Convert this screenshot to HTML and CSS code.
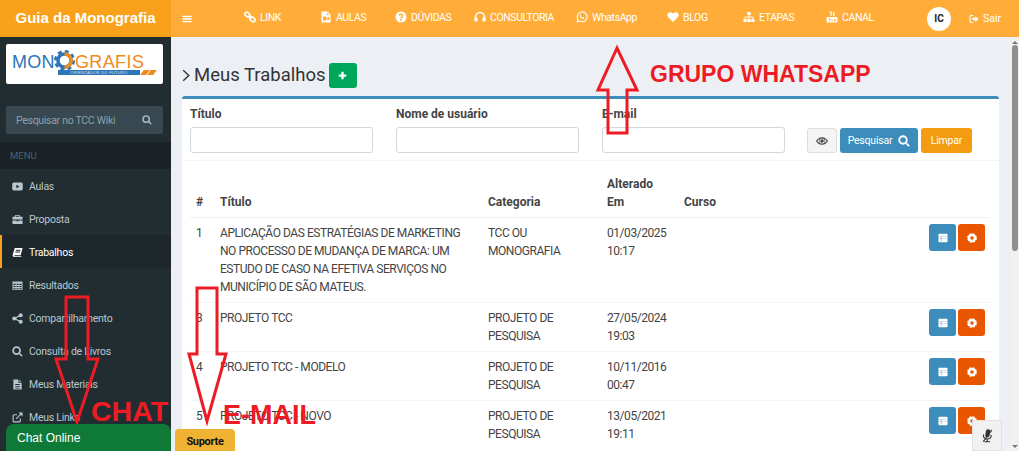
FILE: index.html
```html
<!DOCTYPE html>
<html lang="pt-BR">
<head>
    <meta charset="UTF-8">
    <title>Meus Trabalhos</title>
    <link rel="stylesheet" href="styles.css">
</head>
<body>
    <svg class="sprite" width="0" height="0">
        <symbol id="i-bars" viewBox="0 0 24 24"><path d="M1 4h22v3.5H1zM1 10.2h22v3.5H1zM1 16.5h22V20H1z"/></symbol>
        <symbol id="i-link" viewBox="0 0 24 24"><g fill="none" stroke="currentColor" stroke-width="3.2"><rect x="1.5" y="3.5" width="11" height="7.5" rx="3.7" transform="rotate(40 7 7)"/><rect x="11.5" y="13" width="11" height="7.5" rx="3.7" transform="rotate(40 17 17)"/><path d="M9 9l6 6"/></g></symbol>
        <symbol id="i-film" viewBox="0 0 24 24"><path fill-rule="evenodd" d="M3 1h12l6 6v16H3zM14 3v5h5zM6 11v8h7v-8zM14.500 13v4l4 2v-8z"/></symbol>
        <symbol id="i-question" viewBox="0 0 24 24"><path fill-rule="evenodd" d="M12 1a11 11 0 1 0 0 22a11 11 0 0 0 0-22zM10.300 16.500h3.400v3h-3.400zM10.300 14.800c0-3 3.500-3.200 3.500-5.300c0-2-3.200-2-4.300.2L7 8c1.500-3.800 9.800-4 9.800 1.500c0 3.400-3.300 3.500-3.300 5.300z"/></symbol>
        <symbol id="i-headphones" viewBox="0 0 24 24"><path fill="none" stroke="currentColor" stroke-width="3" d="M3 15v-3a9 9 0 0 1 18 0v3"/><rect x="1" y="13" width="6" height="8" rx="1.500"/><rect x="17" y="13" width="6" height="8" rx="1.500"/></symbol>
        <symbol id="i-whatsapp" viewBox="0 0 24 24"><path fill="none" stroke="currentColor" stroke-width="2.200" d="M2.500 21.500l1.400-5A9.800 9.800 0 1 1 7.600 20.200z"/><path d="M8.500 6.800c-2 1.500-1.500 4 .8 6.500c2.500 2.600 5.300 3.500 7 1.700c.8-.9.600-1.500.2-1.700l-2-1c-.5-.2-.8 0-1.200.6c-.3.400-.6.500-1.200.2c-1.200-.6-2.400-1.800-3-2.900c-.2-.4 0-.6.500-1.200c.3-.4.200-.7 0-1.200l-.8-1.800c-.2-.4-.7-.5-1.300-.2z"/></symbol>
        <symbol id="i-heart" viewBox="0 0 24 24"><path d="M12 22L2.500 12.500C-1.500 8 1.500 2.500 6.500 2.500C9 2.500 11 4 12 5.500C13 4 15 2.500 17.500 2.500C22.500 2.500 25.500 8 21.500 12.500z"/></symbol>
        <symbol id="i-sitemap" viewBox="0 0 24 24"><path d="M8.500 2h7v6h-7zM1 16h6.500v6H1zM8.750 16h6.500v6h-6.500zM16.500 16H23v6h-6.500z"/><path fill="none" stroke="currentColor" stroke-width="1.800" d="M4.200 16v-4h15.600v4M12 8v8"/></symbol>
        <symbol id="i-youtube" viewBox="0 0 24 24"><path fill-rule="evenodd" d="M7 1h2l1 3l1-3h2l-2 5v4H9V6zM14 3h3v7h-3zM3 12h18a2 2 0 0 1 2 2v7a2 2 0 0 1-2 2H3a2 2 0 0 1-2-2v-7a2 2 0 0 1 2-2zM5 15v1.500h1.500V21H8v-4.500h1.500V15zM11 17v4h3v-4h-1v3h-1v-3zM16 15v6h3v-4h-2v-2z"/></symbol>
        <symbol id="i-signout" viewBox="0 0 24 24"><path fill="none" stroke="currentColor" stroke-width="2.500" d="M10 3.500H5a2.500 2.500 0 0 0-2.500 2.500v12A2.500 2.500 0 0 0 5 20.500h5"/><path d="M15 5l8 7l-8 7v-4H8V9h7z"/></symbol>
        <symbol id="i-search" viewBox="0 0 24 24"><circle cx="10" cy="10" r="7.500" fill="none" stroke="currentColor" stroke-width="3.800"/><path d="M15 17.500l2.500-2.500l6 6l-2.500 2.500z"/></symbol>
        <symbol id="i-play" viewBox="0 0 24 24"><path fill-rule="evenodd" d="M4 3.500h16a3.500 3.500 0 0 1 3.500 3.500v10a3.500 3.500 0 0 1-3.500 3.500H4A3.500 3.500 0 0 1 .5 17V7A3.500 3.500 0 0 1 4 3.500zM9.500 8v8l7-4z"/></symbol>
        <symbol id="i-briefcase" viewBox="0 0 24 24"><path fill-rule="evenodd" d="M8 2h8a1.500 1.500 0 0 1 1.500 1.500V6H23v6H1V6h5.500V3.500A1.500 1.500 0 0 1 8 2zM8.500 4v2h7V4zM1 14h9v2h4v-2h9v8H1z"/></symbol>
        <symbol id="i-book" viewBox="0 0 24 24"><path fill-rule="evenodd" d="M6 2h17l-4 16H6c-1.500 0-1.500 2 0 2h15l-1 2H5c-3 0-4-2.500-3.500-5zM8.500 6l-.4 2h10l.4-2zM7.600 10l-.4 2h10l.4-2z"/></symbol>
        <symbol id="i-table" viewBox="0 0 24 24"><path fill-rule="evenodd" d="M1 3h22v18H1zM3 8v3h5V8zM10 8v3h4V8zM16 8v3h5V8zM3 13v2.500h5V13zM10 13v2.500h4V13zM16 13v2.500h5V13zM3 17.500V19h5v-1.500zM10 17.500V19h4v-1.500zM16 17.500V19h5v-1.500z"/></symbol>
        <symbol id="i-share" viewBox="0 0 24 24"><circle cx="5" cy="12" r="4.500"/><circle cx="19" cy="5" r="4.500"/><circle cx="19" cy="19" r="4.500"/><path fill="none" stroke="currentColor" stroke-width="2.500" d="M19 5L5 12l14 7"/></symbol>
        <symbol id="i-file" viewBox="0 0 24 24"><path fill-rule="evenodd" d="M3 1h11v7h7v15H3zM16 1.500L20.500 6H16zM7 11v2h10v-2zM7 15v2h10v-2zM7 19v1.500h10V19z"/></symbol>
        <symbol id="i-external" viewBox="0 0 24 24"><path fill="none" stroke="currentColor" stroke-width="2.500" d="M18 14v5a2.500 2.500 0 0 1-2.500 2.500H5A2.500 2.500 0 0 1 2.500 19V8.500A2.500 2.500 0 0 1 5 6h6M9 15L21 3"/><path d="M14 1h9v9z"/></symbol>
        <symbol id="i-eye" viewBox="0 0 24 24"><path fill-rule="evenodd" d="M12 4.500c5.500 0 9.500 3.500 12 7.500c-2.500 4-6.500 7.500-12 7.500S2.500 16 0 12c2.500-4 6.500-7.500 12-7.500zM12 6.800a5.200 5.200 0 1 0 0 10.400a5.200 5.200 0 0 0 0-10.400zM2.500 12c1.200 1.700 2.600 3 4.200 4a7 7 0 0 1 0-8c-1.600 1-3 2.300-4.200 4zM17.300 8a7 7 0 0 1 0 8c1.600-1 3-2.300 4.200-4c-1.200-1.700-2.600-3-4.200-4z"/><circle cx="12" cy="12" r="3.500"/></symbol>
        <symbol id="i-plus" viewBox="0 0 24 24"><path d="M9 2h6v7h7v6h-7v7H9v-7H2V9h7z"/></symbol>
        <symbol id="i-list" viewBox="0 0 24 24"><path fill-rule="evenodd" d="M3 2h18a2 2 0 0 1 2 2v16a2 2 0 0 1-2 2H3a2 2 0 0 1-2-2V4a2 2 0 0 1 2-2zM1 7.500v1h22v-1zM1 13v1h22v-1zM7 7v13h1.200V7z"/></symbol>
        <symbol id="i-gear" viewBox="0 0 24 24"><circle cx="12" cy="12" r="7" fill="none" stroke="currentColor" stroke-width="5.500"/><circle cx="12" cy="12" r="10" fill="none" stroke="currentColor" stroke-width="3.500" stroke-dasharray="5.200 2.650"/></symbol>
        <symbol id="i-mic" viewBox="0 0 24 24"><rect x="9" y="2" width="7" height="13" rx="3.500" transform="rotate(10 12 8)"/><path fill="none" stroke="currentColor" stroke-width="1.800" d="M5.500 10.500c-.5 4.500 2 7 6 7s6.500-2.500 6.500-6.500M11.500 17.500V21M7 22h9M19 3L5 22"/></symbol>
        <symbol id="i-chevron" viewBox="0 0 10 16"><path fill="none" stroke="currentColor" stroke-width="1.800" d="M1.500 1.500L8.500 8L1.500 14.500"/></symbol>
    </svg>

    <div class="window">
        <header class="topbar">
            <div class="brand">Guia da Monografia</div>
            <div class="topnav">
                <svg class="toggle"><use href="#i-bars"/></svg>
                <nav class="topnav-links">
                    <a><svg class="ico"><use href="#i-link"/></svg>LINK</a>
                    <a><svg class="ico"><use href="#i-film"/></svg>AULAS</a>
                    <a><svg class="ico"><use href="#i-question"/></svg>DÚVIDAS</a>
                    <a><svg class="ico"><use href="#i-headphones"/></svg>CONSULTORIA</a>
                    <a><svg class="ico"><use href="#i-whatsapp"/></svg>WhatsApp</a>
                    <a><svg class="ico"><use href="#i-heart"/></svg>BLOG</a>
                    <a><svg class="ico"><use href="#i-sitemap"/></svg>ETAPAS</a>
                    <a><svg class="ico"><use href="#i-youtube"/></svg>CANAL</a>
                </nav>
                <div class="avatar">IC</div>
                <a class="signout"><svg class="ico"><use href="#i-signout"/></svg>Sair</a>
            </div>
        </header>

        <div class="layout">
            <aside class="sidebar">
                <div class="logo">
                    <span class="logo-mon">MON</span>
                    <svg class="logo-gear" viewBox="0 0 24 24"><circle cx="12" cy="12" r="10.500" fill="none" stroke="#2e75b6" stroke-width="3" stroke-dasharray="4.500 3.750"/><circle cx="12" cy="12" r="7.500" fill="none" stroke="#2e75b6" stroke-width="4"/><path d="M12 4.500A7.500 7.500 0 0 1 12 19.500" fill="none" stroke="#ef8a1d" stroke-width="4"/></svg>
                    <span class="logo-grafis">GRAFIS</span>
                    <span class="logo-bar">ORIENTADOR DO FUTURO</span>
                    <span class="logo-slash"></span>
                    <span class="logo-slash"></span>
                </div>
                <div class="side-search">
                    <span>Pesquisar no TCC Wiki</span>
                    <svg class="ico"><use href="#i-search"/></svg>
                </div>
                <div class="menu-head">MENU</div>
                <ul class="menu">
                    <li><svg class="ico"><use href="#i-play"/></svg>Aulas</li>
                    <li><svg class="ico"><use href="#i-briefcase"/></svg>Proposta</li>
                    <li class="active"><svg class="ico"><use href="#i-book"/></svg>Trabalhos</li>
                    <li><svg class="ico"><use href="#i-table"/></svg>Resultados</li>
                    <li><svg class="ico"><use href="#i-share"/></svg>Compartilhamento</li>
                    <li><svg class="ico"><use href="#i-search"/></svg>Consulta de Livros</li>
                    <li><svg class="ico"><use href="#i-file"/></svg>Meus Materiais</li>
                    <li><svg class="ico"><use href="#i-external"/></svg>Meus Links</li>
                </ul>
            </aside>

            <main class="content">
                <div class="page-title">
                    <svg class="chevron"><use href="#i-chevron"/></svg>
                    <h1>Meus Trabalhos</h1>
                    <button class="btn btn-add"><svg class="ico"><use href="#i-plus"/></svg></button>
                </div>
                <section class="box">
                    <form class="filters">
                        <label>Título<input type="text"></label>
                        <label>Nome de usuário<input type="text"></label>
                        <label>E-mail<input type="text"></label>
                        <div class="filter-actions">
                            <button type="button" class="btn btn-eye"><svg class="ico"><use href="#i-eye"/></svg></button>
                            <button type="button" class="btn btn-search">Pesquisar<svg class="ico"><use href="#i-search"/></svg></button>
                            <button type="button" class="btn btn-clear">Limpar</button>
                        </div>
                    </form>
                    <table class="works">
                        <thead>
                            <tr><th class="col-num">#</th><th class="col-title">Título</th><th class="col-cat">Categoria</th><th class="col-date">Alterado Em</th><th>Curso</th><th class="col-act"></th></tr>
                        </thead>
                        <tbody>
                            <tr>
                                <td>1</td>
                                <td class="cell-title">APLICAÇÃO DAS ESTRATÉGIAS DE MARKETING NO PROCESSO DE MUDANÇA DE MARCA: UM ESTUDO DE CASO NA EFETIVA SERVIÇOS NO MUNICÍPIO DE SÃO MATEUS.</td>
                                <td>TCC OU MONOGRAFIA</td>
                                <td>01/03/2025 10:17</td>
                                <td></td>
                                <td class="actions"><button class="btn btn-list"><svg class="ico"><use href="#i-list"/></svg></button><button class="btn btn-gear"><svg class="ico"><use href="#i-gear"/></svg></button></td>
                            </tr>
                            <tr>
                                <td>3</td>
                                <td class="cell-title">PROJETO TCC</td>
                                <td>PROJETO DE PESQUISA</td>
                                <td>27/05/2024 19:03</td>
                                <td></td>
                                <td class="actions"><button class="btn btn-list"><svg class="ico"><use href="#i-list"/></svg></button><button class="btn btn-gear"><svg class="ico"><use href="#i-gear"/></svg></button></td>
                            </tr>
                            <tr>
                                <td>4</td>
                                <td class="cell-title">PROJETO TCC - MODELO</td>
                                <td>PROJETO DE PESQUISA</td>
                                <td>10/11/2016 00:47</td>
                                <td></td>
                                <td class="actions"><button class="btn btn-list"><svg class="ico"><use href="#i-list"/></svg></button><button class="btn btn-gear"><svg class="ico"><use href="#i-gear"/></svg></button></td>
                            </tr>
                            <tr>
                                <td>5</td>
                                <td class="cell-title">PROJETO TCC - NOVO</td>
                                <td>PROJETO DE PESQUISA</td>
                                <td>13/05/2021 19:11</td>
                                <td></td>
                                <td class="actions"><button class="btn btn-list"><svg class="ico"><use href="#i-list"/></svg></button><button class="btn btn-gear"><svg class="ico"><use href="#i-gear"/></svg></button></td>
                            </tr>
                        </tbody>
                    </table>
                </section>
            </main>

            <div class="scrollbar">
                <span class="scroll-up"></span>
                <span class="scroll-thumb"></span>
                <span class="scroll-down"></span>
            </div>
        </div>

        <!-- annotations drawn over the page -->
        <svg class="marks" viewBox="0 0 1019 451">
            <path d="M617 48L598 90H608V133H627V90H637z"/>
            <path d="M66 297H88V359H98L77 422L56 359H66z"/>
            <path d="M197 288H217V354H226L207 421L189 354H197z"/>
        </svg>
        <span class="mark-label mark-whatsapp">GRUPO WHATSAPP</span>
        <span class="mark-label mark-chat">CHAT</span>
        <span class="mark-label mark-email">E-MAIL</span>

        <div class="chat-tab">Chat Online</div>
        <div class="support-tab">Suporte</div>
        <div class="mic-tab"><svg class="ico"><use href="#i-mic"/></svg></div>
    </div>
</body>
</html>
```

FILE: styles.css
```css
* {
    box-sizing: border-box;
}
html, body {
    margin: 0;
    padding: 0;
    background: #fff;
    overflow: hidden;
}
body {
    font-family: Roboto, "Noto Sans", Arial, sans-serif;
    font-size: 12px;
    color: #444;
}
.sprite {
    position: absolute;
}
.ico {
    width: 12px;
    height: 12px;
    fill: currentColor;
    flex: none;
}
.window {
    position: relative;
    width: 1019px;
    height: 451px;
    overflow: hidden;
    display: flex;
    flex-direction: column;
}

/* top bar */
.topbar {
    display: flex;
    height: 37px;
    flex: none;
}
.brand {
    width: 171px;
    background: #f9a11b;
    color: #fff;
    font-family: "Liberation Sans", Arial, sans-serif;
    font-weight: bold;
    font-size: 15px;
    line-height: 36px;
    text-align: center;
}
.topnav {
    flex: 1;
    display: flex;
    align-items: center;
    background: #ffad38;
    color: #fff;
    padding-left: 11px;
}
.toggle {
    width: 10px;
    height: 10px;
    fill: #fff;
    flex: none;
}
.topnav-links {
    margin-left: 52px;
    display: grid;
    grid-template-columns: 76px 75px 79px 102px 91px 76px 83px 101px;
    margin-top: -3px;
}
.topnav-links a {
    display: flex;
    align-items: center;
    gap: 4px;
    font-size: 10.500px;
    letter-spacing: -.4px;
}
.avatar {
    width: 24px;
    height: 24px;
    border-radius: 50%;
    background: #fff;
    color: #222;
    font-size: 10px;
    font-weight: bold;
    text-align: center;
    line-height: 24px;
}
.signout {
    margin-left: 18px;
    display: flex;
    align-items: center;
    gap: 4px;
    font-size: 10.500px;
}
.signout .ico {
    width: 10px;
    height: 10px;
}

/* sidebar */
.layout {
    flex: 1;
    display: flex;
    min-height: 0;
}
.sidebar {
    width: 171px;
    flex: none;
    background: #222d32;
    padding-top: 7px;
}
.logo {
    position: relative;
    margin: 0 8px 0 6px;
    height: 40px;
    background: #fff;
    border-radius: 2px;
    display: flex;
    align-items: flex-start;
    padding: 10px 0 0 6px;
    font-family: "Liberation Sans", Arial, sans-serif;
    font-size: 18px;
    line-height: 16px;
}
.logo-mon {
    color: #2e75b6;
    letter-spacing: .3px;
}
.logo-grafis {
    color: #ef8a1d;
    letter-spacing: .4px;
}
.logo-gear {
    width: 21px;
    height: 21px;
    margin: -4px 0 0 -1px;
}
.logo-bar {
    position: absolute;
    left: 52px;
    top: 26px;
    width: 82px;
    height: 5px;
    background: #2e75b6;
    color: #dbe8f4;
    font-size: 4px;
    line-height: 5px;
    text-align: center;
    letter-spacing: .3px;
    white-space: nowrap;
}
.logo-slash {
    position: absolute;
    left: 136px;
    top: 26px;
    width: 6px;
    height: 5px;
    background: #ef8a1d;
    transform: skewX(-35deg);
}
.logo-slash + .logo-slash {
    left: 143px;
}
.side-search {
    margin: 22px 8px 8px 6px;
    height: 28px;
    background: #374850;
    border-radius: 2px;
    color: #8fa0a8;
    display: flex;
    align-items: center;
    justify-content: space-between;
    padding: 0 11px 0 10px;
    font-size: 10.500px;
    letter-spacing: -.3px;
}
.side-search .ico {
    width: 10px;
    height: 10px;
    color: #a6b4ba;
}
.menu-head {
    height: 27px;
    background: #1a2226;
    color: #4b646f;
    font-size: 9.500px;
    line-height: 28px;
    padding-left: 10px;
}
.menu {
    list-style: none;
    margin: 0;
    padding: 0;
}
.menu li {
    height: 33px;
    display: flex;
    align-items: center;
    gap: 6px;
    padding: 1px 0 0 12px;
    color: #b8c7ce;
    font-size: 10.500px;
    letter-spacing: -.25px;
}
.menu .ico {
    width: 11px;
    height: 11px;
}
.menu li.active {
    background: #1e282c;
    color: #fff;
    border-left: 2px solid #f9a11b;
    padding-left: 10px;
}

/* content */
.content {
    flex: 1;
    min-width: 0;
    background: #ecf0f5;
    padding: 26px 11px 0 11px;
}
.page-title {
    display: flex;
    align-items: center;
    gap: 4px;
    height: 25px;
}
.chevron {
    width: 8px;
    height: 13px;
    fill: none;
    color: #333;
}
.page-title h1 {
    margin: -2px -1px 0 0;
    font-size: 18.500px;
    font-weight: normal;
    color: #333;
}
.btn {
    border: 1px solid transparent;
    border-radius: 3px;
    padding: 0;
    display: inline-flex;
    align-items: center;
    justify-content: center;
    color: #fff;
    font-family: inherit;
}
.btn-add {
    width: 28px;
    height: 25px;
    background: #00a65a;
}
.btn-add .ico {
    width: 9px;
    height: 9px;
}
.box {
    margin-top: 8px;
    background: #fff;
    border-top: 3px solid #3c8dbc;
    border-radius: 3px;
    height: 400px;
}
.filters {
    display: flex;
    align-items: flex-end;
    padding: 7px 8px 7px 8px;
    border-bottom: 1px solid #f4f4f4;
}
.filters label {
    display: flex;
    flex-direction: column;
    gap: 4px;
    width: 183px;
    margin-right: 23px;
    font-weight: bold;
    font-size: 12px;
    line-height: 17px;
}
.filters input {
    height: 26px;
    border: 1px solid #d2d6de;
    border-radius: 3px;
}
.filter-actions {
    display: flex;
    gap: 3px;
    margin-left: -1px;
}
.filter-actions .btn {
    height: 25px;
    font-size: 10.500px;
    letter-spacing: -.2px;
}
.btn-eye {
    width: 30px;
    background: #f4f4f4;
    border-color: #ddd;
    color: #444;
}
.btn-search {
    width: 78px;
    gap: 6px;
    background: #3c8dbc;
}
.btn-clear {
    width: 51px;
    background: #f39c12;
}
.works {
    width: 800px;
    margin: 0 0 0 8px;
    border-collapse: collapse;
    table-layout: fixed;
    line-height: 18px;
}
.works th {
    text-align: left;
    vertical-align: bottom;
    padding: 14px 6px 6px 0;
    color: #444;
    border-bottom: 1px solid #f0f0f0;
}
.works th.col-date {
    padding-right: 16px;
}
.works td {
    vertical-align: top;
    padding: 6px 6px 6px 0;
    border-top: 1px solid #f4f4f4;
    letter-spacing: -.45px;
}
.works td.cell-title {
    padding-right: 22px;
}
.works tbody tr:first-child td {
    border-top: none;
}
.works th:first-child, .works td:first-child {
    padding-left: 6px;
}
.col-num { width: 30px; }
.col-title { width: 268px; }
.col-cat { width: 119px; }
.col-date { width: 77px; }
.col-act { width: 100px; }
.works td.actions {
    text-align: right;
    padding: 6px 5px 0 0;
    white-space: nowrap;
}
.actions .btn {
    width: 27px;
    height: 27px;
    margin-left: 2px;
}
.btn-list {
    background: #3c8dbc;
}
.btn-gear {
    background: #e85600;
}
.actions .ico {
    width: 10px;
    height: 10px;
}
.scrollbar {
    width: 9px;
    flex: none;
    background: #f1f1f1;
    display: flex;
    flex-direction: column;
    align-items: center;
    padding-top: 4px;
}
.scroll-up {
    border: 3px solid transparent;
    border-top: none;
    border-bottom: 3px solid #777;
}
.scroll-thumb {
    width: 6px;
    height: 206px;
    margin-top: 1px;
    border-radius: 3px;
    background: #8f8f8f;
}
.scroll-down {
    margin-top: auto;
    margin-bottom: 3px;
    border: 3px solid transparent;
    border-bottom: none;
    border-top: 3px solid #777;
}

/* overlays */
.marks {
    position: absolute;
    left: 0;
    top: 0;
    width: 1019px;
    height: 451px;
    pointer-events: none;
}
.marks path {
    fill: none;
    stroke: #ed1c24;
    stroke-width: 3;
}
.mark-label {
    position: absolute;
    color: #ed1c24;
    font-family: "Liberation Sans", Arial, sans-serif;
    font-weight: bold;
    line-height: 1;
    white-space: nowrap;
}
.mark-whatsapp {
    left: 650px;
    top: 63px;
    font-size: 23px;
}
.mark-chat {
    left: 91px;
    top: 397px;
    font-size: 28.500px;
}
.mark-email {
    left: 223px;
    top: 402px;
    font-size: 27px;
}
.chat-tab {
    position: absolute;
    left: 6px;
    bottom: 0;
    width: 165px;
    height: 27px;
    background: #0f7a38;
    border-radius: 8px 8px 0 0;
    color: #fff;
    font-family: "Liberation Sans", Arial, sans-serif;
    font-size: 12px;
    line-height: 29px;
    padding-left: 11px;
}
.support-tab {
    position: absolute;
    left: 175px;
    bottom: 0;
    width: 60px;
    height: 22px;
    background: #f0b232;
    border-radius: 4px 4px 0 0;
    color: #111;
    font-size: 11px;
    font-weight: bold;
    letter-spacing: -.3px;
    line-height: 26px;
    text-align: center;
}
.mic-tab {
    position: absolute;
    left: 972px;
    bottom: 0;
    width: 30px;
    height: 31px;
    background: #f1f1f1;
    border: 1px solid #e2e2e2;
    color: #333;
    display: flex;
    align-items: center;
    justify-content: center;
}
.mic-tab .ico {
    width: 15px;
    height: 15px;
}
```
